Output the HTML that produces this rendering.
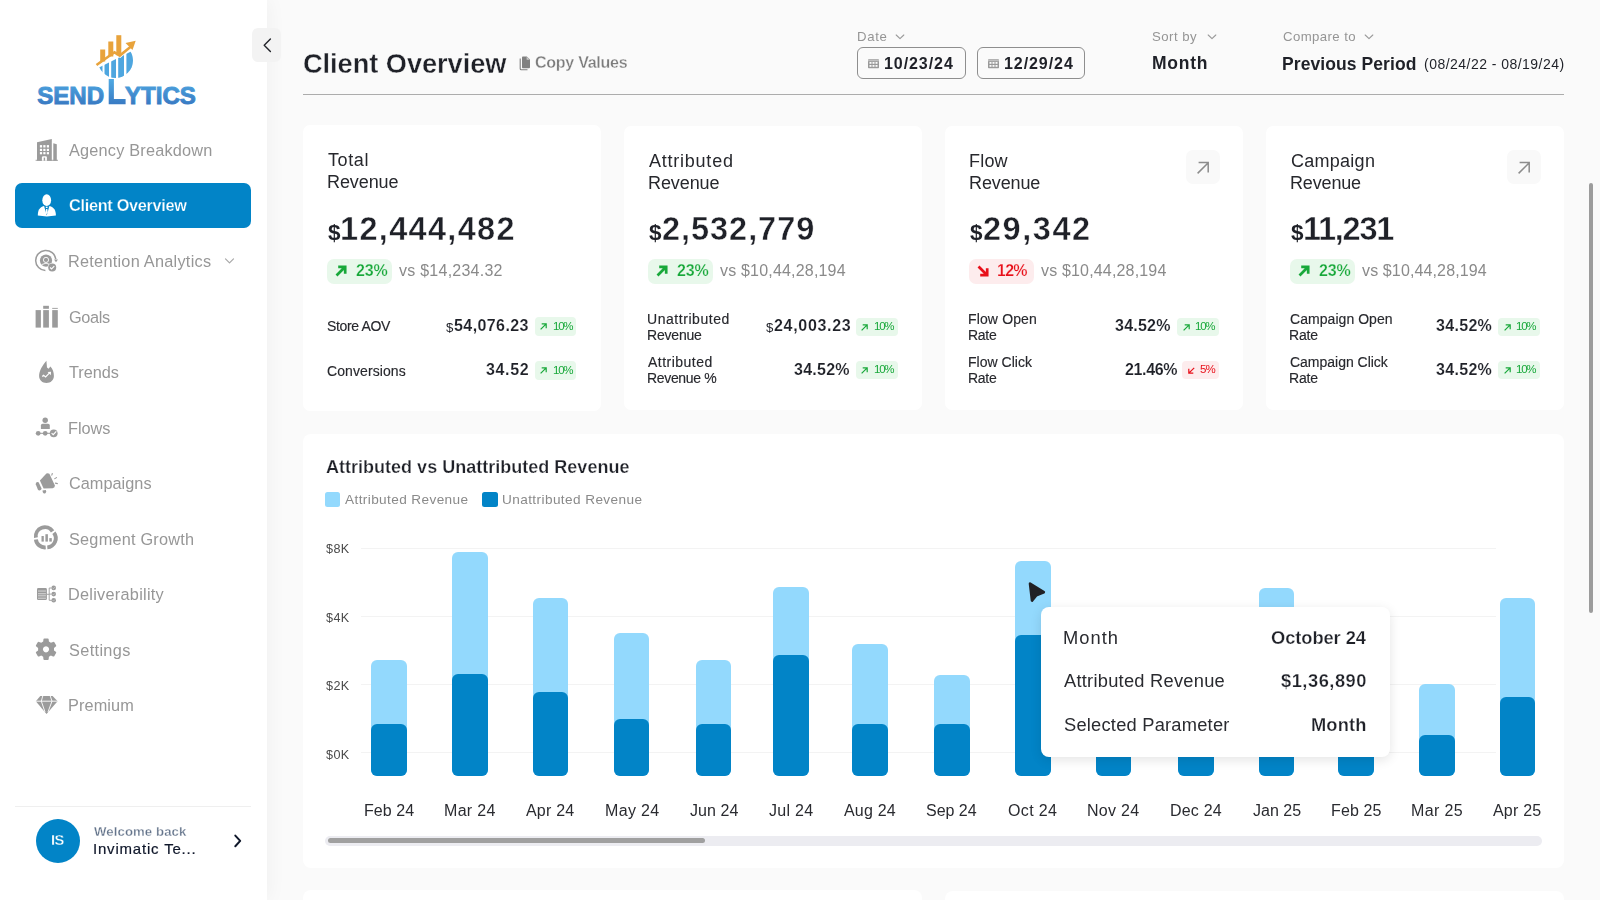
<!DOCTYPE html>
<html><head><meta charset="utf-8"><title>Client Overview</title>
<style>
html,body{margin:0;padding:0;}
body{width:1600px;height:900px;overflow:hidden;position:relative;background:#fafafa;font-family:"Liberation Sans",sans-serif;}
.t{position:absolute;white-space:nowrap;line-height:1;will-change:transform;}
svg{overflow:visible}
</style></head><body>
<div class="t" style="left:302.50px;top:49.98px;font-size:27.2px;font-weight:700;color:#1f2128;letter-spacing:-0.042px;-webkit-text-stroke:0.35px #fafafa;">Client Overview</div>
<svg style="position:absolute;left:517px;top:54px" width="16" height="18" viewBox="0 0 16 18"><path d="M3.2,4.5 L3.2,14.8 Q3.2,15.8 4.2,15.8 L10.5,15.8" fill="none" stroke="#808080" stroke-width="1.1"/>
<path d="M5,3.3 Q5,2.4 5.9,2.4 L9.8,2.4 L13,5.6 L13,13.2 Q13,14.2 12,14.2 L5.9,14.2 Q5,14.2 5,13.2 Z" fill="#808080"/>
<path d="M9.6,2.6 L9.6,5.8 L12.8,5.8" fill="#c8c8c8"/></svg>
<div class="t" style="left:535.20px;top:55.16px;font-size:16px;font-weight:700;color:#7c7c7c;letter-spacing:-0.255px;-webkit-text-stroke:0.3px #fafafa;">Copy Values</div>
<div style="position:absolute;left:302.5px;top:94px;width:1261.5px;height:1px;background:#acacac;border-radius:0px;"></div>
<div class="t" style="left:856.90px;top:30.48px;font-size:13.2px;font-weight:400;color:#959595;letter-spacing:0.659px;">Date</div>
<svg style="position:absolute;left:894.8px;top:32.5px" width="10" height="8" viewBox="0 0 10 8"><path d="M1.2,2 L5,5.6 L8.8,2" fill="none" stroke="#9a9a9a" stroke-width="1.1" stroke-linecap="round" stroke-linejoin="round"/></svg>
<div style="position:absolute;left:857px;top:47px;width:106.5px;height:30px;border:1px solid #8e8e8e;border-radius:6px"></div>
<svg style="position:absolute;left:868px;top:57.5px" width="11" height="11" viewBox="0 0 11 11"><g fill="#9a9a9a"><rect x="0" y="1.2" width="11" height="9" rx="0.8"/></g><g fill="#fafafa"><rect x="1.5" y="4" width="2" height="1.8"/><rect x="4.5" y="4" width="2" height="1.8"/><rect x="7.5" y="4" width="2" height="1.8"/><rect x="1.5" y="7" width="2" height="1.8"/><rect x="4.5" y="7" width="2" height="1.8"/><rect x="7.5" y="7" width="2" height="1.8"/><rect x="0" y="2.6" width="11" height="0.5"/></g></svg>
<div class="t" style="left:884.30px;top:55.66px;font-size:16px;font-weight:700;color:#1f2128;letter-spacing:0.931px;">10/23/24</div>
<div style="position:absolute;left:977px;top:47px;width:105.5px;height:30px;border:1px solid #8e8e8e;border-radius:6px"></div>
<svg style="position:absolute;left:988px;top:57.5px" width="11" height="11" viewBox="0 0 11 11"><g fill="#9a9a9a"><rect x="0" y="1.2" width="11" height="9" rx="0.8"/></g><g fill="#fafafa"><rect x="1.5" y="4" width="2" height="1.8"/><rect x="4.5" y="4" width="2" height="1.8"/><rect x="7.5" y="4" width="2" height="1.8"/><rect x="1.5" y="7" width="2" height="1.8"/><rect x="4.5" y="7" width="2" height="1.8"/><rect x="7.5" y="7" width="2" height="1.8"/><rect x="0" y="2.6" width="11" height="0.5"/></g></svg>
<div class="t" style="left:1004.30px;top:55.66px;font-size:16px;font-weight:700;color:#1f2128;letter-spacing:0.931px;">12/29/24</div>
<div class="t" style="left:1152.00px;top:30.33px;font-size:13.2px;font-weight:400;color:#959595;letter-spacing:0.469px;">Sort by</div>
<svg style="position:absolute;left:1206.5px;top:32.5px" width="10" height="8" viewBox="0 0 10 8"><path d="M1.2,2 L5,5.6 L8.8,2" fill="none" stroke="#9a9a9a" stroke-width="1.1" stroke-linecap="round" stroke-linejoin="round"/></svg>
<div class="t" style="left:1151.50px;top:54.69px;font-size:17.5px;font-weight:700;color:#1f2128;letter-spacing:0.729px;">Month</div>
<div class="t" style="left:1282.50px;top:30.33px;font-size:13.2px;font-weight:400;color:#959595;letter-spacing:0.404px;">Compare to</div>
<svg style="position:absolute;left:1364px;top:32.5px" width="10" height="8" viewBox="0 0 10 8"><path d="M1.2,2 L5,5.6 L8.8,2" fill="none" stroke="#9a9a9a" stroke-width="1.1" stroke-linecap="round" stroke-linejoin="round"/></svg>
<div class="t" style="left:1281.50px;top:55.89px;font-size:17.5px;font-weight:700;color:#1f2128;letter-spacing:0.082px;">Previous Period</div>
<div class="t" style="left:1423.60px;top:56.85px;font-size:14px;font-weight:400;color:#1f2128;letter-spacing:0.470px;">(08/24/22 - 08/19/24)</div>
<div style="position:absolute;left:302.5px;top:124.5px;width:298.5px;height:286.2px;background:#ffffff;border-radius:7px;"></div>
<div class="t" style="left:327.60px;top:150.86px;font-size:18px;font-weight:400;color:#27282d;letter-spacing:0.619px;">Total</div>
<div class="t" style="left:326.60px;top:172.66px;font-size:18px;font-weight:400;color:#27282d;letter-spacing:-0.090px;">Revenue</div>
<div class="t" style="left:327.50px;top:222.45px;font-size:22.5px;font-weight:700;color:#1f2128;letter-spacing:0.000px;">$</div>
<div class="t" style="left:339.60px;top:213.39px;font-size:32.5px;font-weight:700;color:#1f2128;letter-spacing:1.324px;-webkit-text-stroke:0.45px #fff;">12,444,482</div>
<div style="position:absolute;left:326.8px;top:258.5px;width:65.5px;height:25.19999999999999px;background:#e8f8eb;border-radius:7px;"></div>
<svg style="position:absolute;left:334.3px;top:264.3px" width="14" height="14" viewBox="0 0 14 14"><path d="M2.52,11.479999999999999 L11.200000000000001,2.8000000000000003 M4.2,2.8000000000000003 L11.200000000000001,2.8000000000000003 L11.200000000000001,9.799999999999999" fill="none" stroke="#18a83a" stroke-width="2.7" stroke-linecap="butt" stroke-linejoin="miter"/></svg>
<div class="t" style="left:356.30px;top:262.66px;font-size:16px;font-weight:700;color:#18a83a;letter-spacing:-0.148px;-webkit-text-stroke:0.25px #e8f8eb;">23%</div>
<div class="t" style="left:398.90px;top:262.66px;font-size:16px;font-weight:400;color:#8a8a8a;letter-spacing:0.248px;">vs $14,234.32</div>
<div style="position:absolute;left:623.5px;top:125.5px;width:298.5px;height:284.5px;background:#ffffff;border-radius:7px;"></div>
<div class="t" style="left:648.60px;top:151.86px;font-size:18px;font-weight:400;color:#27282d;letter-spacing:0.763px;">Attributed</div>
<div class="t" style="left:647.60px;top:173.66px;font-size:18px;font-weight:400;color:#27282d;letter-spacing:-0.090px;">Revenue</div>
<div class="t" style="left:648.50px;top:222.45px;font-size:22.5px;font-weight:700;color:#1f2128;letter-spacing:0.000px;">$</div>
<div class="t" style="left:661.60px;top:213.39px;font-size:32.5px;font-weight:700;color:#1f2128;letter-spacing:0.961px;-webkit-text-stroke:0.45px #fff;">2,532,779</div>
<div style="position:absolute;left:647.8px;top:258.5px;width:65.5px;height:25.19999999999999px;background:#e8f8eb;border-radius:7px;"></div>
<svg style="position:absolute;left:655.3px;top:264.3px" width="14" height="14" viewBox="0 0 14 14"><path d="M2.52,11.479999999999999 L11.200000000000001,2.8000000000000003 M4.2,2.8000000000000003 L11.200000000000001,2.8000000000000003 L11.200000000000001,9.799999999999999" fill="none" stroke="#18a83a" stroke-width="2.7" stroke-linecap="butt" stroke-linejoin="miter"/></svg>
<div class="t" style="left:677.30px;top:262.66px;font-size:16px;font-weight:700;color:#18a83a;letter-spacing:-0.148px;-webkit-text-stroke:0.25px #e8f8eb;">23%</div>
<div class="t" style="left:719.90px;top:262.66px;font-size:16px;font-weight:400;color:#8a8a8a;letter-spacing:0.189px;">vs $10,44,28,194</div>
<div style="position:absolute;left:944.5px;top:125.5px;width:298.5px;height:284.5px;background:#ffffff;border-radius:7px;"></div>
<div class="t" style="left:968.60px;top:151.86px;font-size:18px;font-weight:400;color:#27282d;letter-spacing:0.198px;">Flow</div>
<div class="t" style="left:968.60px;top:173.66px;font-size:18px;font-weight:400;color:#27282d;letter-spacing:-0.124px;">Revenue</div>
<div style="position:absolute;left:1186.0px;top:150.2px;width:33.799999999999955px;height:33.80000000000001px;background:#f9f9f9;border-radius:7px;"></div>
<svg style="position:absolute;left:1195.0px;top:159.5px" width="16" height="16" viewBox="0 0 16 16"><path d="M2.6,13.4 L13,3 M3.6,2.6 L13.2,2.6 L13.2,12.6" fill="none" stroke="#8c8c8c" stroke-width="1.5"/></svg>
<div class="t" style="left:969.50px;top:222.45px;font-size:22.5px;font-weight:700;color:#1f2128;letter-spacing:0.000px;">$</div>
<div class="t" style="left:982.60px;top:213.39px;font-size:32.5px;font-weight:700;color:#1f2128;letter-spacing:1.534px;-webkit-text-stroke:0.45px #fff;">29,342</div>
<div style="position:absolute;left:968.8px;top:258.5px;width:65.5px;height:25.19999999999999px;background:#fdeced;border-radius:7px;"></div>
<svg style="position:absolute;left:976.3px;top:264.3px" width="14" height="14" viewBox="0 0 14 14"><path d="M2.52,2.52 L11.200000000000001,11.200000000000001 M4.2,11.200000000000001 L11.200000000000001,11.200000000000001 L11.200000000000001,4.2" fill="none" stroke="#e8101a" stroke-width="2.7" stroke-linecap="butt" stroke-linejoin="miter"/></svg>
<div class="t" style="left:997.30px;top:262.66px;font-size:16px;font-weight:700;color:#e8101a;letter-spacing:-0.748px;-webkit-text-stroke:0.25px #fdeced;">12%</div>
<div class="t" style="left:1040.90px;top:262.66px;font-size:16px;font-weight:400;color:#8a8a8a;letter-spacing:0.169px;">vs $10,44,28,194</div>
<div style="position:absolute;left:1265.5px;top:125.5px;width:298.5px;height:284.5px;background:#ffffff;border-radius:7px;"></div>
<div class="t" style="left:1290.60px;top:151.86px;font-size:18px;font-weight:400;color:#27282d;letter-spacing:0.266px;">Campaign</div>
<div class="t" style="left:1289.60px;top:173.66px;font-size:18px;font-weight:400;color:#27282d;letter-spacing:-0.157px;">Revenue</div>
<div style="position:absolute;left:1507.0px;top:150.2px;width:33.799999999999955px;height:33.80000000000001px;background:#f9f9f9;border-radius:7px;"></div>
<svg style="position:absolute;left:1516.0px;top:159.5px" width="16" height="16" viewBox="0 0 16 16"><path d="M2.6,13.4 L13,3 M3.6,2.6 L13.2,2.6 L13.2,12.6" fill="none" stroke="#8c8c8c" stroke-width="1.5"/></svg>
<div class="t" style="left:1290.50px;top:222.45px;font-size:22.5px;font-weight:700;color:#1f2128;letter-spacing:0.000px;">$</div>
<div class="t" style="left:1302.60px;top:213.39px;font-size:32.5px;font-weight:700;color:#1f2128;letter-spacing:-1.267px;-webkit-text-stroke:0.45px #fff;">11,231</div>
<div style="position:absolute;left:1289.8px;top:258.5px;width:65.5px;height:25.19999999999999px;background:#e8f8eb;border-radius:7px;"></div>
<svg style="position:absolute;left:1297.3px;top:264.3px" width="14" height="14" viewBox="0 0 14 14"><path d="M2.52,11.479999999999999 L11.200000000000001,2.8000000000000003 M4.2,2.8000000000000003 L11.200000000000001,2.8000000000000003 L11.200000000000001,9.799999999999999" fill="none" stroke="#18a83a" stroke-width="2.7" stroke-linecap="butt" stroke-linejoin="miter"/></svg>
<div class="t" style="left:1319.30px;top:262.66px;font-size:16px;font-weight:700;color:#18a83a;letter-spacing:-0.198px;-webkit-text-stroke:0.25px #e8f8eb;">23%</div>
<div class="t" style="left:1361.90px;top:262.66px;font-size:16px;font-weight:400;color:#8a8a8a;letter-spacing:0.129px;">vs $10,44,28,194</div>
<div class="t" style="left:327.20px;top:319.45px;font-size:14px;font-weight:400;color:#27282d;letter-spacing:-0.354px;-webkit-text-stroke:0.15px #27282d;">Store AOV</div>
<div class="t" style="left:446.20px;top:320.63px;font-size:13.2px;font-weight:400;color:#1f2128;letter-spacing:0.000px;">$</div>
<div class="t" style="left:454.40px;top:318.26px;font-size:16px;font-weight:700;color:#1f2128;letter-spacing:0.415px;-webkit-text-stroke:0.12px #fff;">54,076.23</div>
<div style="position:absolute;left:534.6px;top:317.2px;width:41.799999999999955px;height:18.5px;background:#e8f8eb;border-radius:4px;"></div>
<svg style="position:absolute;left:539.2px;top:322.4px" width="9" height="9" viewBox="0 0 9 9"><path d="M1.6199999999999999,7.38 L7.2,1.8 M2.6999999999999997,1.8 L7.2,1.8 L7.2,6.3" fill="none" stroke="#18a83a" stroke-width="1.2" stroke-linecap="butt" stroke-linejoin="miter"/></svg>
<div class="t" style="right:1027.92px;top:321.07px;font-size:11.5px;font-weight:400;color:#18a83a;letter-spacing:-1.246px;">10%</div>
<div class="t" style="left:327.20px;top:363.75px;font-size:14px;font-weight:400;color:#27282d;letter-spacing:0.094px;-webkit-text-stroke:0.15px #27282d;">Conversions</div>
<div class="t" style="right:1070.86px;top:361.96px;font-size:16px;font-weight:700;color:#1f2128;letter-spacing:0.640px;-webkit-text-stroke:0.12px #fff;">34.52</div>
<div style="position:absolute;left:534.6px;top:361.2px;width:41.799999999999955px;height:18.5px;background:#e8f8eb;border-radius:4px;"></div>
<svg style="position:absolute;left:539.2px;top:366.4px" width="9" height="9" viewBox="0 0 9 9"><path d="M1.6199999999999999,7.38 L7.2,1.8 M2.6999999999999997,1.8 L7.2,1.8 L7.2,6.3" fill="none" stroke="#18a83a" stroke-width="1.2" stroke-linecap="butt" stroke-linejoin="miter"/></svg>
<div class="t" style="right:1027.92px;top:365.07px;font-size:11.5px;font-weight:400;color:#18a83a;letter-spacing:-1.246px;">10%</div>
<div class="t" style="left:647.10px;top:312.35px;font-size:14px;font-weight:400;color:#27282d;letter-spacing:0.547px;-webkit-text-stroke:0.15px #27282d;">Unattributed</div>
<div class="t" style="left:647.10px;top:328.35px;font-size:14px;font-weight:400;color:#27282d;letter-spacing:-0.192px;-webkit-text-stroke:0.15px #27282d;">Revenue</div>
<div class="t" style="left:765.90px;top:320.83px;font-size:13.2px;font-weight:400;color:#1f2128;letter-spacing:0.000px;">$</div>
<div class="t" style="left:773.60px;top:318.26px;font-size:16px;font-weight:700;color:#1f2128;letter-spacing:0.690px;-webkit-text-stroke:0.12px #fff;">24,003.23</div>
<div style="position:absolute;left:855.8px;top:317.6px;width:41.80000000000007px;height:18.5px;background:#e8f8eb;border-radius:4px;"></div>
<svg style="position:absolute;left:860.4000000000001px;top:322.8px" width="9" height="9" viewBox="0 0 9 9"><path d="M1.6199999999999999,7.38 L7.2,1.8 M2.6999999999999997,1.8 L7.2,1.8 L7.2,6.3" fill="none" stroke="#18a83a" stroke-width="1.2" stroke-linecap="butt" stroke-linejoin="miter"/></svg>
<div class="t" style="right:706.72px;top:321.47px;font-size:11.5px;font-weight:400;color:#18a83a;letter-spacing:-1.246px;">10%</div>
<div class="t" style="left:648.10px;top:354.85px;font-size:14px;font-weight:400;color:#27282d;letter-spacing:0.474px;-webkit-text-stroke:0.15px #27282d;">Attributed</div>
<div class="t" style="left:647.10px;top:370.85px;font-size:14px;font-weight:400;color:#27282d;letter-spacing:-0.329px;-webkit-text-stroke:0.15px #27282d;">Revenue %</div>
<div class="t" style="right:750.22px;top:361.76px;font-size:16px;font-weight:700;color:#1f2128;letter-spacing:0.252px;-webkit-text-stroke:0.12px #fff;">34.52%</div>
<div style="position:absolute;left:855.8px;top:360.6px;width:41.80000000000007px;height:18.5px;background:#e8f8eb;border-radius:4px;"></div>
<svg style="position:absolute;left:860.4000000000001px;top:365.8px" width="9" height="9" viewBox="0 0 9 9"><path d="M1.6199999999999999,7.38 L7.2,1.8 M2.6999999999999997,1.8 L7.2,1.8 L7.2,6.3" fill="none" stroke="#18a83a" stroke-width="1.2" stroke-linecap="butt" stroke-linejoin="miter"/></svg>
<div class="t" style="right:706.72px;top:364.47px;font-size:11.5px;font-weight:400;color:#18a83a;letter-spacing:-1.246px;">10%</div>
<div class="t" style="left:968.40px;top:312.35px;font-size:14px;font-weight:400;color:#27282d;letter-spacing:0.136px;-webkit-text-stroke:0.15px #27282d;">Flow Open</div>
<div class="t" style="left:968.40px;top:328.35px;font-size:14px;font-weight:400;color:#27282d;letter-spacing:-0.262px;-webkit-text-stroke:0.15px #27282d;">Rate</div>
<div class="t" style="right:429.14px;top:318.26px;font-size:16px;font-weight:700;color:#1f2128;letter-spacing:0.232px;-webkit-text-stroke:0.12px #fff;">34.52%</div>
<div style="position:absolute;left:1176.9px;top:317.6px;width:41.799999999999955px;height:18.5px;background:#e8f8eb;border-radius:4px;"></div>
<svg style="position:absolute;left:1181.5px;top:322.8px" width="9" height="9" viewBox="0 0 9 9"><path d="M1.6199999999999999,7.38 L7.2,1.8 M2.6999999999999997,1.8 L7.2,1.8 L7.2,6.3" fill="none" stroke="#18a83a" stroke-width="1.2" stroke-linecap="butt" stroke-linejoin="miter"/></svg>
<div class="t" style="right:385.62px;top:321.47px;font-size:11.5px;font-weight:400;color:#18a83a;letter-spacing:-1.246px;">10%</div>
<div class="t" style="left:968.40px;top:354.85px;font-size:14px;font-weight:400;color:#27282d;letter-spacing:0.025px;-webkit-text-stroke:0.15px #27282d;">Flow Click</div>
<div class="t" style="left:968.40px;top:370.85px;font-size:14px;font-weight:400;color:#27282d;letter-spacing:-0.262px;-webkit-text-stroke:0.15px #27282d;">Rate</div>
<div class="t" style="right:422.42px;top:361.76px;font-size:16px;font-weight:700;color:#1f2128;letter-spacing:-0.348px;-webkit-text-stroke:0.12px #fff;">21.46%</div>
<div style="position:absolute;left:1182.1px;top:360.6px;width:36.600000000000136px;height:18.5px;background:#fdeced;border-radius:4px;"></div>
<svg style="position:absolute;left:1186.7px;top:365.8px" width="9" height="9" viewBox="0 0 9 9"><path d="M7.2,1.8 L1.8,7.2 M1.8,2.6999999999999997 L1.8,7.2 L6.3,7.2" fill="none" stroke="#e8101a" stroke-width="1.2"/></svg>
<div class="t" style="right:385.37px;top:364.47px;font-size:11.5px;font-weight:400;color:#e8101a;letter-spacing:-0.996px;">5%</div>
<div class="t" style="left:1290.40px;top:312.35px;font-size:14px;font-weight:400;color:#27282d;letter-spacing:0.053px;-webkit-text-stroke:0.15px #27282d;">Campaign Open</div>
<div class="t" style="left:1289.40px;top:328.35px;font-size:14px;font-weight:400;color:#27282d;letter-spacing:-0.195px;-webkit-text-stroke:0.15px #27282d;">Rate</div>
<div class="t" style="right:107.86px;top:318.26px;font-size:16px;font-weight:700;color:#1f2128;letter-spacing:0.312px;-webkit-text-stroke:0.12px #fff;">34.52%</div>
<div style="position:absolute;left:1498.2px;top:317.6px;width:41.799999999999955px;height:18.5px;background:#e8f8eb;border-radius:4px;"></div>
<svg style="position:absolute;left:1502.8px;top:322.8px" width="9" height="9" viewBox="0 0 9 9"><path d="M1.6199999999999999,7.38 L7.2,1.8 M2.6999999999999997,1.8 L7.2,1.8 L7.2,6.3" fill="none" stroke="#18a83a" stroke-width="1.2" stroke-linecap="butt" stroke-linejoin="miter"/></svg>
<div class="t" style="right:64.32px;top:321.47px;font-size:11.5px;font-weight:400;color:#18a83a;letter-spacing:-1.246px;">10%</div>
<div class="t" style="left:1290.40px;top:354.85px;font-size:14px;font-weight:400;color:#27282d;letter-spacing:-0.018px;-webkit-text-stroke:0.15px #27282d;">Campaign Click</div>
<div class="t" style="left:1289.40px;top:370.85px;font-size:14px;font-weight:400;color:#27282d;letter-spacing:-0.195px;-webkit-text-stroke:0.15px #27282d;">Rate</div>
<div class="t" style="right:107.86px;top:361.76px;font-size:16px;font-weight:700;color:#1f2128;letter-spacing:0.312px;-webkit-text-stroke:0.12px #fff;">34.52%</div>
<div style="position:absolute;left:1498.2px;top:360.6px;width:41.799999999999955px;height:18.5px;background:#e8f8eb;border-radius:4px;"></div>
<svg style="position:absolute;left:1502.8px;top:365.8px" width="9" height="9" viewBox="0 0 9 9"><path d="M1.6199999999999999,7.38 L7.2,1.8 M2.6999999999999997,1.8 L7.2,1.8 L7.2,6.3" fill="none" stroke="#18a83a" stroke-width="1.2" stroke-linecap="butt" stroke-linejoin="miter"/></svg>
<div class="t" style="right:64.32px;top:364.47px;font-size:11.5px;font-weight:400;color:#18a83a;letter-spacing:-1.246px;">10%</div>
<div style="position:absolute;left:302.5px;top:434px;width:1261.5px;height:433.5px;background:#ffffff;border-radius:8px;"></div>
<div class="t" style="left:325.60px;top:457.86px;font-size:18px;font-weight:700;color:#1f2128;letter-spacing:0.012px;-webkit-text-stroke:0.25px #fff;">Attributed vs Unattributed Revenue</div>
<div style="position:absolute;left:324.5px;top:492px;width:15.5px;height:15.199999999999989px;background:#93d9fd;border-radius:2.5px;"></div>
<div class="t" style="left:344.70px;top:492.89px;font-size:13.6px;font-weight:400;color:#8a8a8a;letter-spacing:0.393px;">Attributed Revenue</div>
<div style="position:absolute;left:482px;top:492px;width:15.5px;height:15.199999999999989px;background:#0284c7;border-radius:2.5px;"></div>
<div class="t" style="left:501.50px;top:492.89px;font-size:13.6px;font-weight:400;color:#8a8a8a;letter-spacing:0.411px;">Unattributed Revenue</div>
<div style="position:absolute;left:360.5px;top:548px;width:1135.5px;height:1px;background:#f3f3f3;border-radius:0px;"></div>
<div class="t" style="right:1250.80px;top:543.13px;font-size:12.6px;font-weight:400;color:#4a4a4a;letter-spacing:0.396px;">$8K</div>
<div style="position:absolute;left:360.5px;top:616px;width:1135.5px;height:1px;background:#f3f3f3;border-radius:0px;"></div>
<div class="t" style="right:1250.80px;top:611.63px;font-size:12.6px;font-weight:400;color:#4a4a4a;letter-spacing:0.396px;">$4K</div>
<div style="position:absolute;left:360.5px;top:684px;width:1135.5px;height:1px;background:#f3f3f3;border-radius:0px;"></div>
<div class="t" style="right:1250.80px;top:680.13px;font-size:12.6px;font-weight:400;color:#4a4a4a;letter-spacing:0.396px;">$2K</div>
<div style="position:absolute;left:360.5px;top:752px;width:1135.5px;height:1px;background:#f3f3f3;border-radius:0px;"></div>
<div class="t" style="right:1250.80px;top:748.53px;font-size:12.6px;font-weight:400;color:#4a4a4a;letter-spacing:0.396px;">$0K</div>
<div style="position:absolute;left:371.25px;top:660.3px;width:35.6px;height:116.00px;background:#93d9fd;border-radius:6px"></div>
<div style="position:absolute;left:371.25px;top:724.4px;width:35.6px;height:51.90px;background:#0284c7;border-radius:6px"></div>
<div class="t" style="left:363.50px;top:802.76px;font-size:16px;font-weight:400;color:#2a2b30;letter-spacing:0.067px;">Feb 24</div>
<div style="position:absolute;left:452.00px;top:552px;width:35.6px;height:224.30px;background:#93d9fd;border-radius:6px"></div>
<div style="position:absolute;left:452.00px;top:674.4px;width:35.6px;height:101.90px;background:#0284c7;border-radius:6px"></div>
<div class="t" style="left:443.50px;top:802.76px;font-size:16px;font-weight:400;color:#2a2b30;letter-spacing:0.320px;">Mar 24</div>
<div style="position:absolute;left:532.50px;top:598px;width:35.6px;height:178.30px;background:#93d9fd;border-radius:6px"></div>
<div style="position:absolute;left:532.50px;top:692.2px;width:35.6px;height:84.10px;background:#0284c7;border-radius:6px"></div>
<div class="t" style="left:526.25px;top:802.76px;font-size:16px;font-weight:400;color:#2a2b30;letter-spacing:0.202px;">Apr 24</div>
<div style="position:absolute;left:613.75px;top:632.5px;width:35.6px;height:143.80px;background:#93d9fd;border-radius:6px"></div>
<div style="position:absolute;left:613.75px;top:718.8px;width:35.6px;height:57.50px;background:#0284c7;border-radius:6px"></div>
<div class="t" style="left:604.50px;top:802.76px;font-size:16px;font-weight:400;color:#2a2b30;letter-spacing:0.336px;">May 24</div>
<div style="position:absolute;left:695.75px;top:660.3px;width:35.6px;height:116.00px;background:#93d9fd;border-radius:6px"></div>
<div style="position:absolute;left:695.75px;top:724.4px;width:35.6px;height:51.90px;background:#0284c7;border-radius:6px"></div>
<div class="t" style="left:689.50px;top:802.76px;font-size:16px;font-weight:400;color:#2a2b30;letter-spacing:0.072px;">Jun 24</div>
<div style="position:absolute;left:773.00px;top:586.8px;width:35.6px;height:189.50px;background:#93d9fd;border-radius:6px"></div>
<div style="position:absolute;left:773.00px;top:655.4px;width:35.6px;height:120.90px;background:#0284c7;border-radius:6px"></div>
<div class="t" style="left:768.75px;top:802.76px;font-size:16px;font-weight:400;color:#2a2b30;letter-spacing:0.291px;">Jul 24</div>
<div style="position:absolute;left:852.00px;top:644.4px;width:35.6px;height:131.90px;background:#93d9fd;border-radius:6px"></div>
<div style="position:absolute;left:852.00px;top:724.3px;width:35.6px;height:52.00px;background:#0284c7;border-radius:6px"></div>
<div class="t" style="left:843.75px;top:802.76px;font-size:16px;font-weight:400;color:#2a2b30;letter-spacing:0.188px;">Aug 24</div>
<div style="position:absolute;left:934.25px;top:674.8px;width:35.6px;height:101.50px;background:#93d9fd;border-radius:6px"></div>
<div style="position:absolute;left:934.25px;top:724.3px;width:35.6px;height:52.00px;background:#0284c7;border-radius:6px"></div>
<div class="t" style="left:926.25px;top:802.76px;font-size:16px;font-weight:400;color:#2a2b30;letter-spacing:-0.013px;">Sep 24</div>
<div style="position:absolute;left:1015.00px;top:561.2px;width:35.6px;height:215.10px;background:#93d9fd;border-radius:6px"></div>
<div style="position:absolute;left:1015.00px;top:634.5px;width:35.6px;height:141.80px;background:#0284c7;border-radius:6px"></div>
<div class="t" style="left:1008.00px;top:802.76px;font-size:16px;font-weight:400;color:#2a2b30;letter-spacing:0.353px;">Oct 24</div>
<div style="position:absolute;left:1095.75px;top:660px;width:35.6px;height:116.30px;background:#93d9fd;border-radius:6px"></div>
<div style="position:absolute;left:1095.75px;top:700px;width:35.6px;height:76.30px;background:#0284c7;border-radius:6px"></div>
<div class="t" style="left:1087.00px;top:802.76px;font-size:16px;font-weight:400;color:#2a2b30;letter-spacing:0.291px;">Nov 24</div>
<div style="position:absolute;left:1178.00px;top:640px;width:35.6px;height:136.30px;background:#93d9fd;border-radius:6px"></div>
<div style="position:absolute;left:1178.00px;top:690px;width:35.6px;height:86.30px;background:#0284c7;border-radius:6px"></div>
<div class="t" style="left:1169.50px;top:802.76px;font-size:16px;font-weight:400;color:#2a2b30;letter-spacing:0.191px;">Dec 24</div>
<div style="position:absolute;left:1258.75px;top:587.5px;width:35.6px;height:188.80px;background:#93d9fd;border-radius:6px"></div>
<div style="position:absolute;left:1258.75px;top:700px;width:35.6px;height:76.30px;background:#0284c7;border-radius:6px"></div>
<div class="t" style="left:1252.50px;top:802.76px;font-size:16px;font-weight:400;color:#2a2b30;letter-spacing:0.022px;">Jan 25</div>
<div style="position:absolute;left:1338.25px;top:650px;width:35.6px;height:126.30px;background:#93d9fd;border-radius:6px"></div>
<div style="position:absolute;left:1338.25px;top:700px;width:35.6px;height:76.30px;background:#0284c7;border-radius:6px"></div>
<div class="t" style="left:1330.75px;top:802.76px;font-size:16px;font-weight:400;color:#2a2b30;letter-spacing:0.117px;">Feb 25</div>
<div style="position:absolute;left:1419.25px;top:684.2px;width:35.6px;height:92.10px;background:#93d9fd;border-radius:6px"></div>
<div style="position:absolute;left:1419.25px;top:735.1px;width:35.6px;height:41.20px;background:#0284c7;border-radius:6px"></div>
<div class="t" style="left:1410.75px;top:802.76px;font-size:16px;font-weight:400;color:#2a2b30;letter-spacing:0.370px;">Mar 25</div>
<div style="position:absolute;left:1499.50px;top:597.8px;width:35.6px;height:178.50px;background:#93d9fd;border-radius:6px"></div>
<div style="position:absolute;left:1499.50px;top:696.7px;width:35.6px;height:79.60px;background:#0284c7;border-radius:6px"></div>
<div class="t" style="left:1493.00px;top:802.76px;font-size:16px;font-weight:400;color:#2a2b30;letter-spacing:0.202px;">Apr 25</div>
<div style="position:absolute;left:324.5px;top:835.5px;width:1217.5px;height:10.700000000000045px;background:#ececf1;border-radius:5px;"></div>
<div style="position:absolute;left:327.5px;top:838.4px;width:377.5px;height:4.800000000000068px;background:#a0a0a0;border-radius:3px;"></div>
<svg style="position:absolute;left:1022px;top:578px" width="28" height="28" viewBox="0 0 28 28"><path d="M8,5.6 L21.8,14.2 L14.4,17.2 L10,22.6 Z" fill="#202125" stroke="#202125" stroke-width="2.6" stroke-linejoin="round"/></svg>
<div style="position:absolute;left:1041px;top:606.7px;width:349px;height:150px;background:#fff;border-radius:8px;box-shadow:0 3px 12px rgba(0,0,0,0.11)"></div>
<div class="t" style="left:1062.60px;top:628.71px;font-size:18.3px;font-weight:400;color:#2a2b30;letter-spacing:1.040px;">Month</div>
<div class="t" style="right:234.49px;top:628.71px;font-size:18.3px;font-weight:700;color:#1f2128;letter-spacing:-0.060px;-webkit-text-stroke:0.25px #fff;">October 24</div>
<div class="t" style="left:1063.60px;top:672.41px;font-size:18.3px;font-weight:400;color:#2a2b30;letter-spacing:0.251px;">Attributed Revenue</div>
<div class="t" style="right:232.92px;top:672.41px;font-size:18.3px;font-weight:700;color:#1f2128;letter-spacing:0.517px;-webkit-text-stroke:0.25px #fff;">$1,36,890</div>
<div class="t" style="left:1063.60px;top:716.31px;font-size:18.3px;font-weight:400;color:#2a2b30;letter-spacing:0.225px;">Selected Parameter</div>
<div class="t" style="right:233.30px;top:716.31px;font-size:18.3px;font-weight:700;color:#1f2128;letter-spacing:0.137px;-webkit-text-stroke:0.25px #fff;">Month</div>
<div style="position:absolute;left:302.5px;top:890px;width:619.5px;height:50px;background:#ffffff;border-radius:8px;"></div>
<div style="position:absolute;left:944.5px;top:891.2px;width:619.5px;height:48.799999999999955px;background:#ffffff;border-radius:8px;"></div>
<div style="position:absolute;left:1589px;top:183px;width:4.2000000000000455px;height:430px;background:#9c9c9c;border-radius:3px;"></div>
<div style="position:absolute;left:0;top:0;width:267px;height:900px;background:#fff;box-shadow:2px 0 18px rgba(0,0,0,0.045)"></div>
<div style="position:absolute;left:252px;top:28px;width:29px;height:34px;background:#f3f3f3;border-radius:6px;"></div>
<svg style="position:absolute;left:252px;top:28px" width="29" height="34" viewBox="0 0 29 34"><path d="M18.4,11 L12.2,17.2 L18.4,23.4" fill="none" stroke="#23252b" stroke-width="1.4" stroke-linecap="round" stroke-linejoin="round"/></svg>
<svg style="position:absolute;left:0px;top:0px" width="267" height="120" viewBox="0 0 267 120">
<defs><linearGradient id="lg" x1="0" y1="0" x2="0" y2="1"><stop offset="0" stop-color="#4ca4e0"/><stop offset="1" stop-color="#3a7fc5"/></linearGradient>
<clipPath id="cc"><circle cx="115.5" cy="60.5" r="17.5"/></clipPath></defs>
<g clip-path="url(#cc)">
<polygon points="96,69 134,50 140,50 140,90 90,90" fill="#4ea6df"/>
</g>
<rect x="102.5" y="56" width="2" height="30" fill="#fff"/>
<rect x="109" y="52" width="2.2" height="30" fill="#fff"/>
<rect x="116" y="50" width="2.2" height="32" fill="#fff"/>
<rect x="124" y="48" width="2.4" height="34" fill="#fff"/>
<rect x="110" y="78" width="30" height="8" fill="#fff"/>
<path d="M96,65.5 L114.5,52 L120,55 L132,44" fill="none" stroke="#fff" stroke-width="5"/>
<rect x="100.2" y="49.5" width="5" height="12" fill="#e8a33c"/>
<rect x="108.3" y="41.5" width="5" height="15" fill="#e8a33c"/>
<rect x="116.3" y="35.2" width="5" height="20" fill="#e8a33c"/>
<path d="M96.5,65 L114.5,52.3 L119.8,55.6 L131,46.5" fill="none" stroke="#e8a33c" stroke-width="2.6"/>
<polygon points="125.5,43 135.7,40.7 132.5,50" fill="#e8a33c"/>

</svg>
<svg style="position:absolute;left:0px;top:0px" width="267" height="120" viewBox="0 0 267 120"><defs><linearGradient id="lgt" gradientUnits="userSpaceOnUse" x1="0" y1="80" x2="0" y2="105"><stop offset="0" stop-color="#4fa8e2"/><stop offset="1" stop-color="#3879c2"/></linearGradient></defs>
<g fill="url(#lgt)" stroke="url(#lgt)" stroke-width="0.9" font-family="Liberation Sans" font-weight="700" font-size="23.6">
<text x="37.2" y="103.7" textLength="67" lengthAdjust="spacingAndGlyphs">SEND</text>
<text x="124.9" y="103.7" textLength="71" lengthAdjust="spacingAndGlyphs">YTICS</text></g>
<path d="M108.7,79 L113.9,79 L113.9,99 L125.6,99 L125.6,104.2 L108.7,104.2 Z" fill="url(#lgt)"/></svg>
<div style="position:absolute;left:15px;top:183px;width:236px;height:44.5px;background:#0284c7;border-radius:7px;"></div>
<div class="t" style="left:69.10px;top:142.00px;font-size:16.3px;font-weight:400;color:#979797;letter-spacing:0.205px;">Agency Breakdown</div>
<div class="t" style="left:69.30px;top:197.20px;font-size:16.3px;font-weight:700;color:#ffffff;letter-spacing:-0.299px;-webkit-text-stroke:0.25px #0284c7;">Client Overview</div>
<div class="t" style="left:68.10px;top:252.90px;font-size:16.3px;font-weight:400;color:#979797;letter-spacing:0.254px;">Retention Analytics</div>
<div class="t" style="left:69.10px;top:308.70px;font-size:16.3px;font-weight:400;color:#979797;letter-spacing:-0.323px;">Goals</div>
<div class="t" style="left:69.10px;top:364.30px;font-size:16.3px;font-weight:400;color:#979797;letter-spacing:-0.045px;">Trends</div>
<div class="t" style="left:68.10px;top:419.90px;font-size:16.3px;font-weight:400;color:#979797;letter-spacing:-0.019px;">Flows</div>
<div class="t" style="left:69.10px;top:475.40px;font-size:16.3px;font-weight:400;color:#979797;letter-spacing:0.024px;">Campaigns</div>
<div class="t" style="left:69.10px;top:531.00px;font-size:16.3px;font-weight:400;color:#979797;letter-spacing:0.222px;">Segment Growth</div>
<div class="t" style="left:68.10px;top:586.40px;font-size:16.3px;font-weight:400;color:#979797;letter-spacing:0.265px;">Deliverability</div>
<div class="t" style="left:69.10px;top:641.80px;font-size:16.3px;font-weight:400;color:#979797;letter-spacing:0.359px;">Settings</div>
<div class="t" style="left:68.10px;top:697.30px;font-size:16.3px;font-weight:400;color:#979797;letter-spacing:0.105px;">Premium</div>
<svg style="position:absolute;left:220px;top:254px" width="20" height="14" viewBox="0 0 20 14"><path d="M5.5,4.8 L9.5,8.8 L13.5,4.8" fill="none" stroke="#a8a8a8" stroke-width="1.2" stroke-linecap="round" stroke-linejoin="round"/></svg>
<svg style="position:absolute;left:30px;top:135px" width="35" height="35" viewBox="0 0 35 35"><polygon points="7,7.2 21.8,3.9 21.8,25.7 7,25.7" fill="#9b9b9b"/><rect x="5.6" y="24.8" width="22.4" height="0.9" fill="#9b9b9b"/>
<polygon points="23.3,8.2 26.8,9.3 26.8,25.7 23.3,25.7" fill="#9b9b9b"/>
<g fill="#fff"><rect x="9.9" y="10.1" width="2.2" height="2.4"/><rect x="13.3" y="10.1" width="2.2" height="2.4"/><rect x="16.8" y="10.1" width="2.2" height="2.4"/>
<rect x="9.9" y="13.8" width="2.2" height="2.2"/><rect x="13.3" y="13.8" width="2.2" height="2.2"/><rect x="16.8" y="13.8" width="2.2" height="2.2"/>
<rect x="9.9" y="17.1" width="2.2" height="2.2"/><rect x="13.3" y="17.1" width="2.2" height="2.2"/><rect x="16.8" y="17.1" width="2.2" height="2.2"/>
<path d="M11.9,25.7 L11.9,22.5 Q11.9,21.2 13.2,21.2 L15.6,21.2 Q16.9,21.2 16.9,22.5 L16.9,25.7 Z"/></g>
<rect x="13.7" y="22.6" width="1.4" height="3.1" fill="#9b9b9b"/></svg>
<svg style="position:absolute;left:30px;top:190px" width="35" height="35" viewBox="0 0 35 35"><ellipse cx="16.7" cy="10.2" rx="4.4" ry="5.9" fill="#fff"/>
<path d="M7.8,25.6 C7.8,20 9.5,17.3 14,16 L19.4,16 C24,17.3 25.9,20 25.9,25.6 Q16.8,27.2 7.8,25.6 Z" fill="#fff"/>
<path d="M14.1,15.9 L16.7,25.4 L19.4,15.9 Z" fill="#0a86c8"/>
<rect x="15.85" y="16.7" width="1.7" height="1.3" fill="#fff"/>
<path d="M16.05,18.9 L17.35,18.9 L17.8,22.8 L16.7,24.2 L15.6,22.8 Z" fill="#fff"/></svg>
<svg style="position:absolute;left:30px;top:245px" width="35" height="35" viewBox="0 0 35 35"><path d="M15.4,25.6 A10.1,10.1 0 1 1 25.8,14.2" fill="none" stroke="#9b9b9b" stroke-width="1.5"/>
<polygon points="24,14.4 28,14.4 26,17.3" fill="#9b9b9b"/>
<circle cx="16" cy="15.6" r="6.1" fill="#9b9b9b"/>
<circle cx="16" cy="14.9" r="2.6" fill="none" stroke="#fff" stroke-width="0.9"/>
<path d="M11.6,19.6 Q16,16.8 20.4,19.6" fill="none" stroke="#fff" stroke-width="0.9"/>
<circle cx="22.2" cy="22.6" r="4.6" fill="#fff"/><circle cx="22.2" cy="22.6" r="4" fill="#9b9b9b"/>
<path d="M20.1,22.5 L21.6,24 L24.3,21.2" fill="none" stroke="#fff" stroke-width="1.1"/></svg>
<svg style="position:absolute;left:30px;top:300px" width="35" height="35" viewBox="0 0 35 35"><g fill="#9b9b9b"><rect x="5.6" y="10.1" width="5.3" height="17.5"/><rect x="13.2" y="10.1" width="5.7" height="17.5"/><rect x="13.2" y="5.8" width="5.7" height="3"/>
<rect x="22.2" y="10.1" width="5.6" height="17.5"/><rect x="22.2" y="7.9" width="5.6" height="0.9"/></g></svg>
<svg style="position:absolute;left:30px;top:355px" width="35" height="35" viewBox="0 0 35 35"><path d="M16.4,5.8 L17,12.4 L18.6,13.8 L20.4,11.5 C22.8,14 23.9,17.2 23.9,21 C23.9,25.2 20.6,28 16.5,28 C12.4,28 9.1,25.2 9.1,21 C9.1,15.6 12.6,10.5 16.4,5.8 Z" fill="#9b9b9b"/>
<path d="M12.2,21.5 L13.6,20.3 L15.6,21.9 L19.8,17.6" fill="none" stroke="#fff" stroke-width="1.1"/>
<polygon points="17.6,17 21,16.8 20.8,20.2" fill="#fff"/></svg>
<svg style="position:absolute;left:30px;top:410px" width="35" height="35" viewBox="0 0 35 35"><g fill="#9b9b9b"><circle cx="15.2" cy="10.3" r="2.7"/>
<path d="M10.9,19.1 L10.9,15.6 Q10.9,13.8 12.6,13.8 L18.1,13.8 Q19.8,13.8 19.8,15.6 L19.8,19.1 Z"/>
<circle cx="8.2" cy="23.3" r="2.4"/><circle cx="15.2" cy="23.3" r="2.4"/><rect x="8" y="22.8" width="14" height="1"/>
<circle cx="23.7" cy="23.3" r="3.9"/></g>
<path d="M21.6,23.2 L23.2,24.7 L26.3,21.3" fill="none" stroke="#fff" stroke-width="1.1"/></svg>
<svg style="position:absolute;left:30px;top:466px" width="35" height="35" viewBox="0 0 35 35"><g fill="#9b9b9b"><path d="M9.9,14.6 L16.4,7.6 Q17.8,6.6 19.4,7.8 L24.9,19.6 Q25,21.8 22.8,22.2 L13.6,22.6 Z"/>
<path d="M6,16.8 Q7.2,15.4 8.6,16.2 L11.6,22.6 Q11.6,24.2 9.6,24.6 Q8.3,24.4 7.8,23.4 L5.8,18.2 Z"/>
<path d="M12.5,24.6 L15.8,24 Q17,25.8 15.4,27.2 Q13.6,28 12.8,26.2 Z"/></g>
<g stroke="#9b9b9b" stroke-width="1.1" stroke-linecap="round"><path d="M22.3,7.6 L21.8,9.1"/><path d="M24.8,12.6 L26.5,11.6"/><path d="M25.4,17.1 L27.4,17.6"/></g></svg>
<svg style="position:absolute;left:30px;top:521px" width="35" height="35" viewBox="0 0 35 35"><g fill="none" stroke="#9b9b9b" stroke-width="3.9">
<path d="M5.9,16.6 A9.1,9.1 0 0 1 22.6,10.4"/><path d="M23.9,11.8 A9.1,9.1 0 0 1 17.3,26.4"/><path d="M15.7,26.4 A9.1,9.1 0 0 1 5.9,18.4"/></g>
<g fill="#9b9b9b"><rect x="11.5" y="15" width="2.3" height="5.6"/><rect x="15.4" y="13.2" width="2.5" height="7.4"/><rect x="19.3" y="17.1" width="2.5" height="3.5"/></g></svg>
<svg style="position:absolute;left:30px;top:577px" width="35" height="35" viewBox="0 0 35 35"><rect x="7" y="11.1" width="9.9" height="11.9" rx="1.3" fill="#9b9b9b"/>
<g fill="#c9c9c9"><rect x="8" y="13.4" width="7.9" height="1.3"/><rect x="8" y="16" width="7.9" height="1.3"/><rect x="8" y="18.1" width="7.9" height="1.3"/><rect x="8" y="20.6" width="7.9" height="1.3"/></g>
<path d="M16.9,17.3 L19.2,17.3 M21.6,11 L19.2,11 L19.2,23.3 L21.6,23.3 M19.2,17.1 L21.6,17.1" fill="none" stroke="#9b9b9b" stroke-width="0.9"/>
<g fill="#9b9b9b"><circle cx="23.7" cy="10.9" r="2.3"/><circle cx="23.7" cy="17.1" r="2.3"/><circle cx="23.7" cy="23.3" r="2.3"/></g>
<g fill="none" stroke="#ddd" stroke-width="0.6"><path d="M22.7,11 L23.4,11.7 L24.8,10.2"/><path d="M22.7,17.2 L23.4,17.9 L24.8,16.4"/><path d="M22.7,23.4 L23.4,24.1 L24.8,22.6"/></g></svg>
<svg style="position:absolute;left:30px;top:632px" width="35" height="35" viewBox="0 0 35 35"><path fill="#9b9b9b" fill-rule="evenodd" d="M13.4,7.4 Q13.4,6.4 14.4,6.4 L17.7,6.4 Q18.7,6.4 18.7,7.4 L18.9,9.6 L20.9,10.8 L23,9.9 Q23.9,9.5 24.4,10.3 L26.1,13.2 Q26.5,14.1 25.8,14.6 L24,15.9 L24,18.4 L25.8,19.7 Q26.5,20.2 26.1,21.1 L24.4,24 Q23.9,24.8 23,24.4 L20.9,23.5 L18.9,24.7 L18.7,26.9 Q18.7,27.9 17.7,27.9 L14.4,27.9 Q13.4,27.9 13.4,26.9 L13.2,24.7 L11.2,23.5 L9.1,24.4 Q8.2,24.8 7.7,24 L6,21.1 Q5.6,20.2 6.3,19.7 L8.1,18.4 L8.1,15.9 L6.3,14.6 Q5.6,14.1 6,13.2 L7.7,10.3 Q8.2,9.5 9.1,9.9 L11.2,10.8 L13.2,9.6 Z M16,14.2 A3.1,3.1 0 1 0 16.01,14.2 Z"/></svg>
<svg style="position:absolute;left:30px;top:688px" width="35" height="35" viewBox="0 0 35 35"><polygon points="10.3,8 22.6,8 27.6,13.2 16.5,25.9 5.8,13.2" fill="#9b9b9b"/>
<g fill="none" stroke="#fff" stroke-width="0.9"><path d="M5.8,13.2 L27.6,13.2"/><path d="M12.8,7.8 L11.3,13.2 L15,24"/><path d="M20.2,7.8 L22,13.2 L18,24"/></g></svg>
<div style="position:absolute;left:15px;top:806px;width:236px;height:1px;background:#efefef;border-radius:0px;"></div>
<div style="position:absolute;left:35.5px;top:818.5px;width:44.5px;height:44.5px;border-radius:50%;background:#0284c7"></div>
<div class="t" style="left:51.00px;top:833.44px;font-size:14.6px;font-weight:700;color:#ffffff;letter-spacing:-0.655px;-webkit-text-stroke:0.3px #0284c7;">IS</div>
<div class="t" style="left:94.00px;top:824.83px;font-size:13.2px;font-weight:700;color:#64748b;letter-spacing:0.087px;-webkit-text-stroke:0.3px #fff;">Welcome back</div>
<div class="t" style="left:93.00px;top:841.30px;font-size:15px;font-weight:400;color:#0f172a;letter-spacing:0.805px;-webkit-text-stroke:0.2px #0f172a;">Invimatic Te...</div>
<svg style="position:absolute;left:228px;top:832px" width="18" height="18" viewBox="0 0 18 18"><path d="M7.3,3.6 L12.2,8.9 L7.3,14.2" fill="none" stroke="#0f172a" stroke-width="2" stroke-linecap="round" stroke-linejoin="round"/></svg>

</body></html>
